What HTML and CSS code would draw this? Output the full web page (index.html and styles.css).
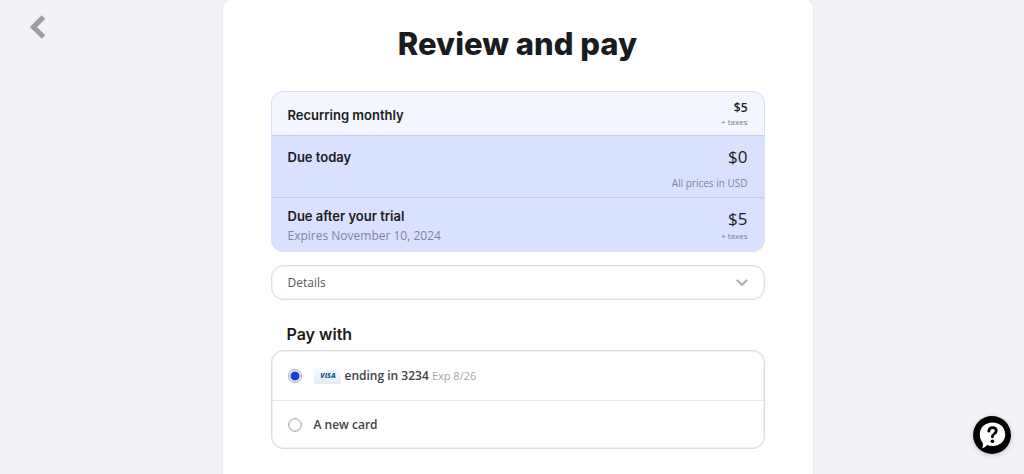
FILE: index.html
```html
<!DOCTYPE html>
<html lang="en">
<head>
<meta charset="utf-8">
<meta name="viewport" content="width=device-width, initial-scale=1">
<title>Review and pay</title>
<link rel="stylesheet" href="styles.css">
</head>
<body>
<button class="back" type="button" aria-label="Back">
  <svg width="18" height="28" viewBox="0 0 18 28" aria-hidden="true"><path d="M14.500 4 4.500 14l10 10" fill="none" stroke="#9e9fa0" stroke-width="5.200"/></svg>
</button>
<main class="checkout">
  <h1 class="title">Review and pay</h1>
  <section class="summary">
    <div class="row">
      <h2 class="label">Recurring monthly</h2>
      <div class="amount"><strong class="price-small">$5</strong><span class="tax">+ taxes</span></div>
    </div>
    <div class="row row-due">
      <h2 class="label">Due today</h2>
      <div class="amount"><span class="price">$0</span><span class="currency">All prices in USD</span></div>
    </div>
    <div class="row row-trial">
      <div>
        <h2 class="label">Due after your trial</h2>
        <p class="expires">Expires November 10, 2024</p>
      </div>
      <div class="amount"><span class="price">$5</span><span class="tax">+ taxes</span></div>
    </div>
  </section>
  <button class="details" type="button" aria-expanded="false">
    <span>Details</span>
    <svg width="12" height="8" viewBox="0 0 12 8" aria-hidden="true"><path d="m1.500 1.500 4.500 4.300 4.500-4.300" fill="none" stroke="#b2b2b2" stroke-width="2.400" stroke-linecap="round"/></svg>
  </button>
  <h2 class="pay-title" id="pay-title">Pay with</h2>
  <div class="methods" role="radiogroup" aria-labelledby="pay-title">
    <label class="method">
      <input class="radio" type="radio" name="method" checked>
      <svg class="visa" width="27" height="16" viewBox="0 0 27 16" role="img" aria-label="Visa">
        <defs><linearGradient id="card" x2="0" y2="1"><stop stop-color="#fcfdfe"/><stop offset="1" stop-color="#e2ecf6"/></linearGradient></defs>
        <rect width="27" height="16" rx="1" fill="url(#card)"/>
        <text x="14" y="10" text-anchor="middle" class="visa-text">VISA</text>
      </svg>
      <span class="card-name">ending in 3234 <span class="expiry">Exp 8/26</span></span>
    </label>
    <label class="method">
      <input class="radio" type="radio" name="method">
      <span class="card-name">A new card</span>
    </label>
  </div>
</main>
<button class="help" type="button" aria-label="Help">
  <svg width="38" height="38" viewBox="0 0 38 38" aria-hidden="true">
    <circle cx="19" cy="19" r="19" fill="#000"/>
    <path d="M19.500 6.500c7.400 0 12.700 5 12.700 11.700S26.900 30 19.500 30c-2 0-3.700-.4-5.300-1.100-1.200 1.600-3 2.700-5 3.200.7-1.500 1-3.400.5-5.400-1.900-2.200-2.900-5.100-2.900-8.500 0-6.700 5.300-11.700 12.700-11.700Z" fill="#fff"/>
    <path d="M15.800 15.200c.2-2.200 1.600-3.500 3.800-3.500s3.700 1.200 3.700 3.100c0 3-3.900 2.900-3.900 6" fill="none" stroke="#000" stroke-width="2.800" stroke-linecap="round"/>
    <circle cx="19.400" cy="25.200" r="1.800" fill="#000"/>
  </svg>
</button>
</body>
</html>
```
FILE: styles.css
```css
* { box-sizing: border-box; }
body {
  margin: 0;
  padding-left: 11px;
  min-height: 100vh;
  display: flex;
  background: #f1f3f7;
  color: #1a1c20;
  font: 12px/20px "Open Sans", sans-serif;
}
h1, h2, p { margin: 0; }
button { border: 0; padding: 0; background: none; font: inherit; cursor: pointer; }
svg { display: block; flex: none; }
.back { position: fixed; top: 13px; left: 29px; }
.checkout {
  width: 100%;
  max-width: 590px;
  margin: 0 auto;
  padding: 24px 48px;
  background: #fff;
  border-radius: 8px 8px 0 0;
  box-shadow: 0 0 2px #d9dbe0;
}
.title {
  margin-bottom: 27px;
  text-align: center;
  font: 800 31px/40px Inter, sans-serif;
}
.summary {
  border: 1px solid #d6ddf6;
  border-radius: 12px;
  background: #dae1ff;
  overflow: hidden;
}
.row {
  display: flex;
  justify-content: space-between;
  align-items: center;
  min-height: 43px;
  padding: 2px 16px 0;
  background: #f3f6fe;
}
.row-due, .row-trial { border-top: 1px solid #c4cdec; background: #dae1ff; }
.row-due { align-items: flex-start; min-height: 62px; padding-top: 11px; }
.row-trial { min-height: 54px; padding-top: 2px; }
.label { font: 600 13px/20px Inter, sans-serif; }
.expires { color: #7e859b; }
.amount { display: flex; flex-direction: column; align-items: flex-end; }
.price-small { line-height: 14px; font-weight: 600; }
.price { font-size: 17px; line-height: 20px; }
.tax { color: #747b8c; font-size: 8px; line-height: 14px; }
.currency { margin-top: 6px; color: #7e859b; font-size: 10px; }
.details {
  display: flex;
  justify-content: space-between;
  align-items: center;
  width: 100%;
  height: 35px;
  margin-top: 13px;
  padding: 0 16px;
  border: 1px solid #d9dff3;
  border-radius: 12px;
  box-shadow: inset 0 0 0 1px #f0f3fb;
  color: #55585c;
}
.pay-title { margin: 23px 16px 5px; font: 600 16px/22px Inter, sans-serif; }
.methods {
  border: 1px solid #dadbdd;
  border-radius: 12px;
  box-shadow: inset 0 0 0 1px #f1f1f2;
}
.method {
  display: flex;
  align-items: center;
  height: 49px;
  padding: 0 16px;
}
.method + .method { height: 48px; border-top: 1px solid #e4e5e7; }
.radio {
  appearance: none;
  width: 14px;
  height: 14px;
  margin: 0 12px 0 0;
  border: 1px solid #b0b1b4;
  border-radius: 50%;
  background: #fff;
  box-shadow: inset 0 0 0 1px #e0e0e2;
}
.radio:checked { background: radial-gradient(circle, #1740d8 4px, #fff 5px); }
.visa { margin-right: 4px; }
.visa-text { fill: #1c5590; font: italic 800 7px "Open Sans", sans-serif; }
.card-name { color: #3f4247; font-weight: 600; }
.expiry { color: #a2a4a8; font-size: 11px; font-weight: 400; }
.help {
  position: fixed;
  right: 13px;
  bottom: 20px;
  border-radius: 50%;
  box-shadow: 0 1px 5px #0003;
}
```
